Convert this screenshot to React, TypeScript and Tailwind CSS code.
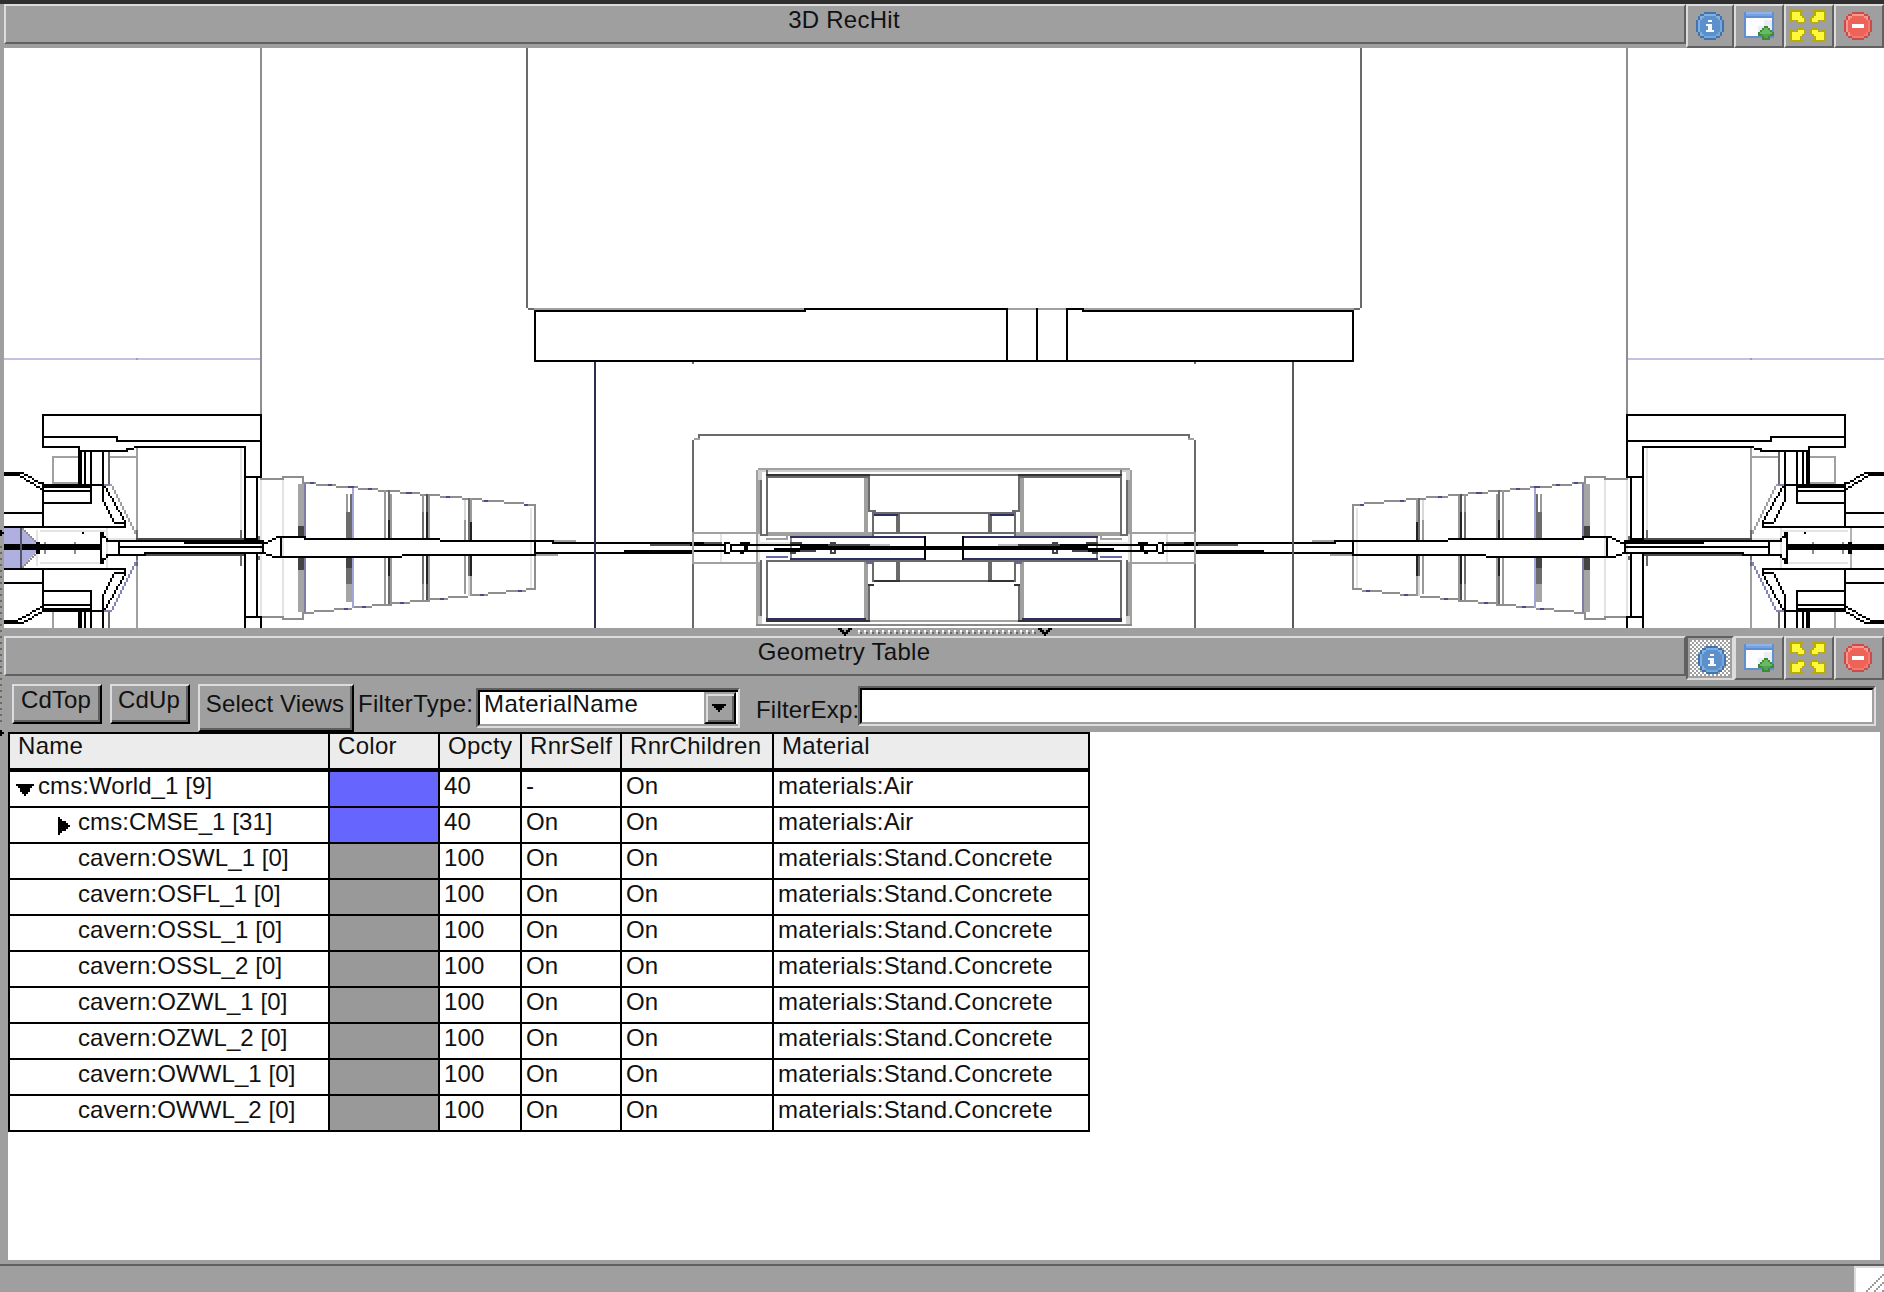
import React from "react";

/* Builds a path of unit squares for a list of polylines: "x,y x,y; x,y x,y". */
function raster(spec: string): string {
  const out: string[] = [];
  for (const part of spec.split(";")) {
    const pts = part
      .trim()
      .split(/\s+/)
      .filter(Boolean)
      .map((p) => p.split(",").map(Number));
    for (let i = 0; i + 1 < pts.length; i++) {
      const [x0, y0] = pts[i];
      const [x1, y1] = pts[i + 1];
      const lx = Math.min(x0, x1);
      const ly = Math.min(y0, y1);
      if (x0 === x1 || y0 === y1) {
        out.push(`M${lx} ${ly}h${Math.abs(x1 - x0) + 1}v${Math.abs(y1 - y0) + 1}H${lx}z`);
        continue;
      }
      const n = Math.max(Math.abs(x1 - x0), Math.abs(y1 - y0));
      for (let k = 0; k <= n; k++) {
        const x = Math.round(x0 + ((x1 - x0) * k) / n);
        const y = Math.round(y0 + ((y1 - y0) * k) / n);
        out.push(`M${x} ${y}h1v1h-1z`);
      }
    }
  }
  return out.join("");
}

function Px({ c, d }: { c: string; d: string }) {
  return <path fill={c} d={raster(d)} />;
}

function Bitmap({ rows, colors, x = 0, y = 0 }: { rows: string[]; colors: Record<string, string>; x?: number; y?: number }) {
  return (
    <>
      {Object.entries(colors).map(([ch, color]) => (
        <path
          key={ch}
          fill={color}
          d={rows
            .flatMap((row, j) => [...row].map((v, i) => (v === ch ? `M${x + i} ${y + j}h1v1h-1z` : "")))
            .join("")}
        />
      ))}
    </>
  );
}

/* One half of the detector; the other half is its mirror image. */
function HalfDetector() {
  return (
    <>
      <Px c="#c2c2e2" d="2,179 129,179" />
      <Px c="#9c9cc4" d="68,179 68,179" />
      <Px c="#e4e4e4" d="120,224 120,264; 20,265 53,265; 20,281 49,281; 18,265 18,282; 141,240 141,308; 130,240 130,307; 265,254 265,294; 360,266 360,281; 379,266 379,281; 53,264 53,283; 379,271 400,271; 53,269 68,269" />
      <Px c="#8e8e8e" d="130,24 130,206; 130,239 141,239; 141,238 151,238 151,241; 130,308 141,308; 141,309 151,309 151,306; 152,241 267,252; 152,306 267,294; 267,253 267,294; 22,271 22,276; 37,271 37,276" />
      <Px c="#a0a0a0" d="38,228 26,228 26,241 38,241; 55,228 68,228; 55,242 68,267; 26,306 26,313; 267,277 278,277; 276,270 287,270; 68,224 68,269; 68,278 68,313" />
      <Px c="#6a6a6a" d="54,226 54,241; 54,306 54,313; 120,265 120,269; 68,265 68,269; 120,278 120,282; 68,278 68,282; 129,268 129,269; 129,278 129,279" />
      <Px c="#4c4c4c" d="68,269 121,269; 72,277 121,277" />
      <Px c="#8484b4" d="52,242 54,242; 68,280 55,305; 52,305 54,305" />
      <Px c="#4a4a92" d="155,241 156,241; 164,242 165,242; 174,243 176,243; 184,244 185,244; 203,246 205,246; 223,248 224,248; 242,250 243,250; 262,252 263,252; 172,304 173,304; 181,303 182,303; 200,301 201,301; 220,299 221,299; 240,297 241,297; 259,295 260,295" />

      {/* shielding and walls */}
      <Px c="#000" d="21,207 130,207 130,238; 21,207 21,223 39,223 39,242; 21,218 58,218 58,220 130,220; 39,225 63,225; 63,224 66,224; 67,223 122,223 122,269; 122,277 122,313; 122,238 130,238; 122,308 130,308 130,313; 128,238 128,269; 128,277 128,308" />
      <Px c="#000" d="40,225 40,242; 42,225 42,242; 45,225 45,242; 51,225 51,250 57,261 62,261 62,263; 52,243 62,260" />
      <Px c="#000" d="39,306 39,313; 40,306 40,313; 42,306 42,313; 45,306 45,313; 51,313 51,297 57,286 62,286 62,284; 62,287 52,304" />
      <Px c="#000" d="21,241 21,263; 22,242 51,242; 22,243 45,243; 22,245 45,245; 45,243 45,251 22,251; 21,284 21,305; 22,295 45,295 45,303; 21,302 45,302; 21,304 45,304; 21,305 51,305" />
      <Px c="#000" d="2,236 11,236 21,242; 2,237 9,237 20,244; 2,256 21,256; 2,263 62,263; 2,284 62,284; 2,291 21,291; 2,310 8,310 20,303; 2,311 11,311 21,305" />

      {/* beam pipe */}
      <Px c="#000" d="2,272 50,272; 2,273 50,273; 2,274 50,274; 18,271 19,271; 18,275 19,275; 18,276 19,276; 41,266 41,266; 50,266 50,281; 51,266 51,268; 52,268 53,270 131,270; 51,281 51,279; 52,279 53,277 72,277; 59,270 59,277; 60,273 131,273; 72,276 131,276; 122,269 128,269; 92,271 131,271; 131,271 131,276; 132,271 134,270 139,268 152,268; 132,276 134,277 137,278 200,278; 140,268 140,278; 152,269 219,269; 220,270 276,270; 201,277 267,277; 267,270 267,277" />
      <Px c="#000" d="276,271 351,271; 267,276 345,276; 312,275 362,275; 345,272 362,272" />
      <Px c="#555" d="325,272 344,272; 352,271 360,271" />

      {/* cone collars */}
      <path fill="#a5a5a5" d="M149 242h3v21h-3zM149 285h3v21h-3zM173 292h3v9h-3z" />
      <path fill="#444" d="M149 263h3v5h-3zM149 279h3v6h-3zM173 279h3v5h-3z" />
      <path fill="#6c6c6c" d="M173 256h3v13h-3zM173 284h3v8h-3z" />
      <Px c="#7c7ca6" d="152,242 152,267; 152,279 152,305" />
      <Px c="#a4a4d8" d="176,244 176,268; 176,279 176,303" />
      <Px c="#999" d="173,247 173,255; 192,245 192,268; 195,247 195,268; 192,279 192,301; 195,279 195,301; 211,247 211,255; 214,248 214,268; 211,292 211,299; 214,278 214,299; 235,249 235,260; 235,288 235,297" />
      <Px c="#6c6c6c" d="175,247 175,255; 194,245 194,259; 194,288 194,301; 211,256 211,268; 211,278 211,291; 234,249 234,269; 234,278 234,287" />
      <Px c="#d8d8d8" d="232,250 232,259; 234,288 234,297" />
      <Px c="#999" d="232,260 232,269; 232,278 232,296" />
      <Px c="#222" d="194,260 194,268; 194,279 194,287; 213,256 213,268; 213,278 213,291; 235,261 235,269; 235,278 235,287" />
      <Px c="#505050" d="213,247 213,255; 213,292 213,299" />

      {/* upper box and inner hall */}
      <Px c="#6a6a6a" d="263,24 263,153; 264,154 266,154; 346,181 346,181; 471,217 349,217 349,219; 346,220 346,266; 346,281 346,313" />
      <Px c="#a0a0a0" d="347,219 349,219; 346,267 346,280; 346,266 378,266; 346,281 378,281; 471,234 379,234; 378,235 378,312; 379,240 379,266; 379,281 379,307; 383,266 436,266; 383,267 436,267; 383,269 393,269 393,267; 432,238 432,266; 433,238 433,266; 432,281 432,309; 433,281 433,309; 434,310 471,310" />
      <Px c="#cfcfcf" d="380,235 471,235; 379,235 379,239; 380,235 380,239; 379,308 379,312; 380,308 380,312" />
      <Px c="#888" d="378,312 471,312; 395,268 395,279" />
      <Px c="#6a6a6a" d="380,240 380,267 383,267; 383,235 383,267; 380,280 380,307; 383,281 383,310; 383,280 471,280; 383,238 433,238; 434,237 471,237; 434,238 434,255 437,255; 436,256 436,267; 437,256 471,256; 448,257 448,266; 449,257 449,266; 437,266 471,266; 448,281 448,290; 449,281 449,290; 436,281 436,290; 434,292 434,310; 437,290 471,290" />
      <Px c="#333" d="383,237 434,237; 383,310 434,310; 437,290 449,290; 434,292 436,292" />
      <Px c="#2e2e60" d="437,257 448,257; 395,268 462,268; 395,279 462,279; 383,309 432,309" />
      <Px c="#6868a8" d="383,278 393,278; 433,281 435,281" />
      <Px c="#000" d="462,268 462,279; 365,272 371,272; 365,275 371,275; 373,272 403,272; 373,275 400,275; 387,274 400,274; 400,273 471,273; 400,274 471,274; 400,272 414,272" />
      <Px c="#000" d="362,271 364,271; 362,272 362,275; 365,272 365,275; 362,276 364,276; 370,271 374,271; 371,272 371,272; 372,272 372,275; 373,272 373,275; 371,275 371,275; 370,276 371,276" />
      <Px c="#444" d="415,271 417,271; 415,275 415,276 417,276 417,275; 414,272 434,272; 395,271 400,271; 395,276 397,276; 400,275 407,275" />
      <Px c="#bbb" d="435,272 444,272" />
    </>
  );
}

function GeometryView() {
  return (
    <svg className="block h-[580px] w-[1880px] bg-white" viewBox="2 24 940 290" shapeRendering="crispEdges">
      <path fill="#b0b0e0" d="M2 264h9l7 7v5l-7 8H2z" />
      <Px c="#8e8e8e" d="11,264 18,271; 18,276 11,283" />
      <HalfDetector />
      <Px c="#55556a" d="10,264 10,283" />
      <g transform="translate(944 0) scale(-1 1)">
        <HalfDetector />
        <Px c="#b4b4b4" d="18,264 18,270; 18,277 18,283" />
      </g>
      <Px c="#a0a0a0" d="267,154 402,154; 504,154 532,154; 541,154 676,154" />
      <Px c="#000" d="267,155 402,155; 402,154 503,154 503,180; 518,154 518,180; 541,155 541,154 533,154 533,180; 541,155 676,155 676,180 267,180 267,155" />
      <Px c="#2e2e50" d="297,181 297,313" />
      <Px c="#5a5a5a" d="646,181 646,313" />
    </svg>
  );
}

const DISC = [
  "....oooooo....",
  "..oolllllloo..",
  ".ollffffffllo.",
  ".olfffffffflo.",
  "olffffwwffffLo",
  "olffffffffffLo",
  "olfffwwwffffLo",
  "olffffwwffffLo",
  "olffffwwffffLo",
  "olfffwwwwfffLo",
  ".olffffffffLo.",
  ".olLffffffLLo.",
  "..ooLLLLLLoo..",
  "....oooooo....",
];

const STOP = DISC.map((r, i) => {
  const clean = r.replace(/w/g, "f");
  return i === 6 || i === 7 ? clean.slice(0, 4) + "wwwwww" + clean.slice(10) : clean;
});

function InfoIcon() {
  return (
    <svg className="h-[28px] w-[28px]" viewBox="0 0 14 14" shapeRendering="crispEdges">
      <Bitmap rows={DISC} colors={{ o: "#3f74b4", l: "#86b0dc", L: "#7aa6d6", f: "#5c90ca", w: "#f4f8fc" }} />
    </svg>
  );
}

function CloseIcon() {
  return (
    <svg className="h-[28px] w-[28px]" viewBox="0 0 14 14" shapeRendering="crispEdges">
      <Bitmap rows={STOP} colors={{ o: "#cc4a48", l: "#f49a92", L: "#f07a70", f: "#ee6358", w: "#ffffff" }} />
    </svg>
  );
}

function UndockIcon() {
  return (
    <svg className="h-[28px] w-[30px]" viewBox="0 0 15 14" shapeRendering="crispEdges">
      <path fill="#5f8ed2" d="M0 0h15v13H0z" />
      <path fill="#8db4ea" d="M1 0h13v1H1z" />
      <path fill="#76a2e0" d="M1 1h13v1H1z" />
      <path fill="#fdfdfe" d="M1 3h13v9H1z" />
      <path fill="#e9eef6" d="M7 7h7v5H7zM10 4h4v3h-4z" />
      <Bitmap
        x={7}
        y={7}
        rows={["...gg...", "..gLLg..", ".gLLLLg.", "gLLLLLLg", "ggGGGGgg", "..gGGg..", "..gggg.."]}
        colors={{ g: "#3a8a3a", L: "#6cb862", G: "#52a34c" }}
      />
    </svg>
  );
}

const ARROW = ["ooooooo.", "oyyyyo..", "oyyyyo..", "oyyyyyo.", "oyyyyyyo", "oo.oyyyo", "....ooo."];

function ExpandIcon() {
  const colors = { o: "#b9ac00", y: "#fdf83a" };
  return (
    <svg className="h-[32px] w-[36px]" viewBox="0 0 18 16" shapeRendering="crispEdges">
      <Bitmap rows={ARROW} colors={colors} />
      <g transform="translate(18 0) scale(-1 1)">
        <Bitmap rows={ARROW} colors={colors} />
      </g>
      <g transform="translate(0 16) scale(1 -1)">
        <Bitmap rows={ARROW} colors={colors} />
      </g>
      <g transform="translate(18 16) scale(-1 -1)">
        <Bitmap rows={ARROW} colors={colors} />
      </g>
    </svg>
  );
}

const RAISED = "border-2 border-t-[#dcdcdc] border-l-[#dcdcdc] border-r-[#606060] border-b-[#606060]";

function TitleBar({ title, pressed }: { title: string; pressed?: boolean }) {
  return (
    <div className="flex h-11 items-start">
      <div className={`h-10 w-[1682px] pr-[2px] text-center leading-[27px] tracking-[0.25px] ${RAISED}`}>{title}</div>
      {pressed ? (
        <div className="flex h-11 w-12 border-2 border-t-[#606060] border-l-[#606060] border-r-[#dcdcdc] border-b-[#dcdcdc] p-[2px]">
          <div className="flex h-full w-full items-center justify-center bg-[repeating-conic-gradient(#fff_0_25%,#9f9f9f_0_50%)] bg-[length:4px_4px] pt-1 pl-1">
            <InfoIcon />
          </div>
        </div>
      ) : (
        <div className={`flex h-11 w-12 items-center justify-center ${RAISED}`}>
          <InfoIcon />
        </div>
      )}
      <div className={`flex h-11 w-[50px] justify-center pt-[6px] ${RAISED}`}>
        <UndockIcon />
      </div>
      <div className={`flex h-11 w-[50px] justify-center pt-1 pr-[2px] ${RAISED}`}>
        <ExpandIcon />
      </div>
      <div className={`flex h-11 w-[50px] items-center justify-center pr-[2px] ${RAISED}`}>
        <CloseIcon />
      </div>
    </div>
  );
}

const BUTTON =
  "flex items-start justify-center border-2 border-t-[#dcdcdc] border-l-[#dcdcdc] border-r-black border-b-black shadow-[inset_-2px_-2px_0_#606060] whitespace-nowrap tracking-[0.12px] pr-[2px]";

const SUNKEN_OUT = "border-2 border-t-[#606060] border-l-[#606060] border-r-[#dcdcdc] border-b-[#dcdcdc]";
const SUNKEN_IN = "border-2 border-t-black border-l-black border-r-[#9f9f9f] border-b-[#9f9f9f] bg-white";

function Toolbar() {
  return (
    <div className="flex h-14 items-start pt-2 pl-2">
      <button className={`h-10 w-[90px] leading-[27px] ${BUTTON}`}>CdTop</button>
      <button className={`ml-2 h-10 w-20 leading-[27px] ${BUTTON}`}>CdUp</button>
      <button className={`ml-2 h-12 w-[156px] leading-[35px] ${BUTTON}`}>Select Views</button>
      <span className="ml-1 w-[118px] pt-[6px] leading-[28px] tracking-[0.3px] whitespace-nowrap">FilterType:</span>
      <div className={`mt-1 h-10 w-[264px] ${SUNKEN_OUT}`}>
        <div className={`flex h-full justify-between ${SUNKEN_IN} border-r-0`}>
          <span className="pl-1 leading-[24px] tracking-[0.4px]">MaterialName</span>
          <div className="mr-[2px] flex h-8 w-8 items-center justify-center border-2 border-t-[#9f9f9f] border-l-[#9f9f9f] border-r-black border-b-black bg-[#9f9f9f] pr-[2px] shadow-[inset_2px_2px_0_#dcdcdc,inset_-2px_-2px_0_#606060]">
            <svg className="h-[8px] w-[14px]" viewBox="0 0 7 4" shapeRendering="crispEdges">
              <Bitmap rows={["#######", ".#####.", "..###..", "...#..."]} colors={{ "#": "#000" }} />
            </svg>
          </div>
        </div>
      </div>
      <span className="ml-4 w-[102px] pt-[12px] leading-[28px] tracking-[0.2px] whitespace-nowrap">FilterExp:</span>
      <div className={`mt-[2px] h-10 w-[1018px] ${SUNKEN_OUT}`}>
        <div className={`h-full ${SUNKEN_IN}`} />
      </div>
    </div>
  );
}

const COLS = "grid grid-cols-[320px_110px_82px_100px_152px_316px]";

type Row = { name: string; depth: 0 | 1; arrow?: "open" | "closed"; blue?: boolean; opacity: string; self: string; material: string };

const ROWS: Row[] = [
  { name: "cms:World_1 [9]", depth: 0, arrow: "open", blue: true, opacity: "40", self: "-", material: "materials:Air" },
  { name: "cms:CMSE_1 [31]", depth: 1, arrow: "closed", blue: true, opacity: "40", self: "On", material: "materials:Air" },
  ...["OSWL_1", "OSFL_1", "OSSL_1", "OSSL_2", "OZWL_1", "OZWL_2", "OWWL_1", "OWWL_2"].map(
    (n): Row => ({ name: `cavern:${n} [0]`, depth: 1, opacity: "100", self: "On", material: "materials:Stand.Concrete" }),
  ),
];

function GeometryTable() {
  return (
    <div className="w-[1082px] border-l-2 border-black">
      <div className={`${COLS} h-[38px] border-t-2 border-b-2 border-black bg-[#ececec] leading-[24px] tracking-[0.3px]`}>
        {["Name", "Color", "Opcty", "RnrSelf", "RnrChildren", "Material"].map((h) => (
          <div key={h} className="border-r-2 border-black pl-2">
            {h}
          </div>
        ))}
      </div>
      <div className="border-t-2 border-black">
        {ROWS.map((r) => (
          <div key={r.name} className={`${COLS} h-9 border-b-2 border-black leading-[28px] tracking-[0.16px] whitespace-nowrap`}>
            <div className="flex border-r-2 border-black tracking-[0.08px]">
              <div className={`flex shrink-0 justify-end ${r.depth ? "w-[68px]" : "w-[28px]"}`}>
                {r.arrow === "open" && (
                  <svg className="mt-[12px] mr-[4px] h-[12px] w-[18px]" viewBox="0 0 9 6" shapeRendering="crispEdges">
                    <Bitmap rows={["#########", ".#######.", "..#####..", "..#####..", "...###...", "....#...."]} colors={{ "#": "#000" }} />
                  </svg>
                )}
                {r.arrow === "closed" && (
                  <svg className="mt-[9px] mr-[8px] h-[18px] w-[12px]" viewBox="0 0 6 9" shapeRendering="crispEdges">
                    <Bitmap rows={["#.....", "##....", "####..", "#####.", "######", "#####.", "####..", "##....", "#....."]} colors={{ "#": "#000" }} />
                  </svg>
                )}
              </div>
              <span>{r.name}</span>
            </div>
            <div className={`border-r-2 border-black ${r.blue ? "bg-[#6666ff]" : "bg-[#999999]"}`} />
            <div className="border-r-2 border-black pl-1">{r.opacity}</div>
            <div className="border-r-2 border-black pl-1">{r.self}</div>
            <div className="border-r-2 border-black pl-1">On</div>
            <div className="border-r-2 border-black pl-1">{r.material}</div>
          </div>
        ))}
      </div>
    </div>
  );
}

function Splitter() {
  const chevron = ["##...##", ".##.##.", "..###..", "...#..."];
  return (
    <div className="h-2 pl-[834px]">
      <svg className="block h-2 w-[214px]" viewBox="0 0 107 4" shapeRendering="crispEdges">
        <Bitmap rows={chevron} colors={{ "#": "#000" }} />
        <Bitmap x={100} rows={chevron} colors={{ "#": "#000" }} />
        {Array.from({ length: 30 }, (_, i) => (
          <React.Fragment key={i}>
            <rect x={10 + i * 3} y={1} width={1} height={1} fill="#fff" />
            <rect x={11 + i * 3} y={2} width={1} height={1} fill="#6c6c5c" />
            <rect x={10 + i * 3} y={2} width={1} height={1} fill="#d4d4d4" />
          </React.Fragment>
        ))}
      </svg>
    </div>
  );
}

function SideGrip() {
  const arrow = ["#.", "##", "#."];
  return (
    <svg className="block h-[1260px] w-1 shrink-0" viewBox="0 0 2 630" shapeRendering="crispEdges">
      <Bitmap y={263} rows={arrow} colors={{ "#": "#000" }} />
      <Bitmap y={363} rows={arrow} colors={{ "#": "#000" }} />
      {Array.from({ length: 30 }, (_, i) => (
        <rect key={i} x={0} y={271 + i * 3} width={1} height={1} fill="#6c6c5c" />
      ))}
    </svg>
  );
}

export default function App() {
  return (
    <div className="flex h-[1292px] w-[1884px] flex-col overflow-hidden bg-[#9f9f9f] font-['Liberation_Sans',Arial,sans-serif] text-[24px] text-[#111]">
      <div className="h-1 shrink-0 bg-[#2f2f2f]" />
      <div className="flex h-[1260px] shrink-0">
        <SideGrip />
        <div className="flex w-[1880px] flex-col">
          <TitleBar title="3D RecHit" />
          <GeometryView />
          <Splitter />
          <div className="h-10">
            <TitleBar title="Geometry Table" pressed />
          </div>
          <Toolbar />
          <div className="mx-1 h-[528px] bg-white">
            <GeometryTable />
          </div>
        </div>
      </div>
      <div className="flex h-7 shrink-0 items-end justify-between border-t-2 border-[#606060]">
        <div />
        <svg className="block h-[26px] w-[30px] border-t-2 border-l-2 border-[#dcdcdc] bg-white" viewBox="0 0 14 12" shapeRendering="crispEdges">
          <Px c="#9a9a9a" d="4,12 13,3; 8,12 13,7; 12,12 13,11" />
        </svg>
      </div>
    </div>
  );
}
